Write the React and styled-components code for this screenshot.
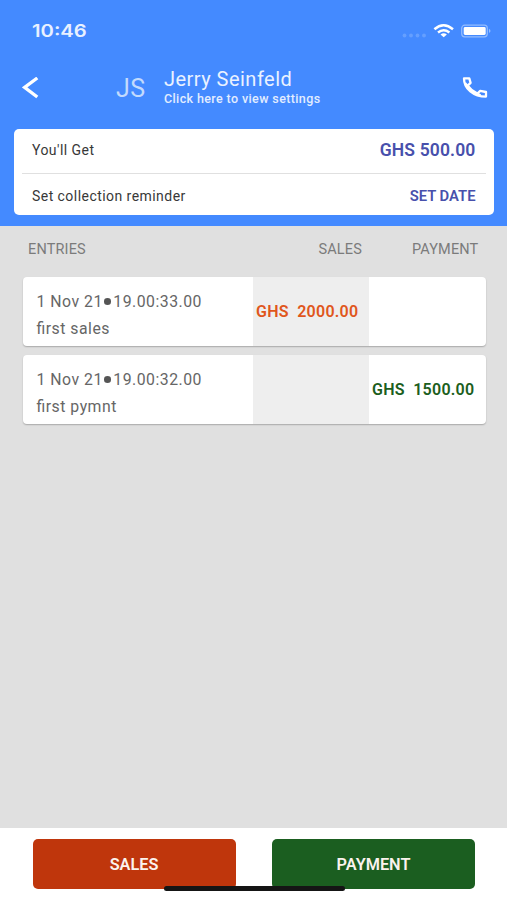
import React from "react";
import styled, { createGlobalStyle } from "styled-components";

const GlobalStyle = createGlobalStyle`
  * {
    box-sizing: border-box;
  }

  body {
    margin: 0;
    font-family: Roboto, "Liberation Sans", sans-serif;
  }
`;

const Screen = styled.div`
  width: 507px;
  height: 900px;
  display: flex;
  flex-direction: column;
  position: relative;
  background: #e0e0e0;
  overflow: hidden;
`;

const Top = styled.header`
  height: 226px;
  background: #448aff;
`;

const StatusBar = styled.div`
  height: 60px;
  padding: 2px 16px 0 32px;
  display: flex;
  align-items: center;
  justify-content: space-between;
`;

const Time = styled.span`
  font-family: Inter, sans-serif;
  font-size: 17px;
  font-weight: 600;
  color: #e9f1ff;
  transform: scaleX(1.19);
  transform-origin: left center;
`;

const StatusIcons = styled.div`
  display: flex;
  align-items: center;
`;

const NavBar = styled.div`
  height: 55px;
  display: flex;
  align-items: center;
  padding: 0 19px 0 22px;
`;

const BackIcon = styled.svg`
  width: 18px;
  height: 22px;
`;

const Initials = styled.span`
  margin-left: 76px;
  padding-top: 2px;
  width: 48px;
  font-size: 25px;
  letter-spacing: 0.5px;
  color: #c3dafd;
`;

const Person = styled.div`
  flex: 1;
  display: flex;
  flex-direction: column;
`;

const Name = styled.span`
  font-size: 20px;
  line-height: 20px;
  padding-bottom: 2px;
  letter-spacing: 0.47px;
  color: #eaf2ff;
`;

const Hint = styled.span`
  font-size: 12.5px;
  font-weight: 500;
  line-height: 16px;
  letter-spacing: 0.38px;
  color: #e2edff;
`;

const SummaryCard = styled.div`
  margin: 14px 13px 0 14px;
  height: 86px;
  padding: 0 8px;
  border-radius: 5px;
  background: #fff;
`;

const SummaryRow = styled.div`
  height: ${(p) => (p.$divider ? 45 : 41)}px;
  padding: ${(p) => (p.$divider ? "0 10.5px 3px 10px" : "3px 10.5px 0 10px")};
  display: flex;
  align-items: center;
  justify-content: space-between;
  border-bottom: ${(p) => (p.$divider ? "1.5px solid #e0e0e0" : "none")};
`;

const SummaryLabel = styled.span`
  font-size: 14px;
  letter-spacing: 0.45px;
  color: #383838;
`;

const SummaryValue = styled.span`
  font-size: ${(p) => p.$size}px;
  font-weight: 600;
  letter-spacing: ${(p) => p.$spacing}px;
  color: #4850ac;
`;

const Columns = styled.div`
  display: grid;
  grid-template-columns: 290.5px 93.5px 1fr;
  padding: 0 28px;
  height: 51px;
  align-items: center;
  padding-bottom: 5px;
  font-size: 14.5px;
  letter-spacing: 0.15px;
  color: #7b7b7b;
`;

const Entries = styled.main`
  flex: 1;
  display: flex;
  flex-direction: column;
  gap: 9px;
  padding: 0 21.5px 0 22.5px;
`;

const Entry = styled.div`
  height: 69px;
  display: grid;
  grid-template-columns: 230.5px 116px 1fr;
  border-radius: 4px;
  background: #fff;
  box-shadow: 0 1px 1.5px rgba(0, 0, 0, 0.25);
`;

const Details = styled.div`
  display: flex;
  flex-direction: column;
  padding: 11px 0 0 14px;
  font-size: 15.8px;
  line-height: 27px;
  letter-spacing: 0.5px;
  font-feature-settings: "liga" 1;
  color: #666;
`;

const When = styled.span`
  display: flex;
  align-items: center;
`;

const Dot = styled.i`
  width: 7.5px;
  height: 7px;
  margin: 0 2px 0 1px;
  border-radius: 50%;
  background: #555;
`;

const Amount = styled.div`
  display: flex;
  align-items: center;
  padding-left: 3px;
  font-size: 16px;
  font-weight: 600;
  letter-spacing: 0.25px;
  white-space: pre;
  color: ${(p) => p.$color};
  background: ${(p) => p.$bg || "transparent"};
`;

const Footer = styled.footer`
  height: 72px;
  padding: 11px 32px 0 32.5px;
  display: flex;
  justify-content: space-between;
  background: #fff;
`;

const ActionButton = styled.button`
  width: 203px;
  height: 50px;
  border: none;
  border-radius: 5px;
  font-family: inherit;
  font-size: 16.3px;
  font-weight: 600;
  color: #fbf3ee;
  background: ${(p) => p.$bg};
`;

const HomeIndicator = styled.div`
  position: absolute;
  left: 164px;
  bottom: 9px;
  width: 181px;
  height: 5px;
  border-radius: 3px;
  background: #151515;
`;

const entries = [
  { id: 1, date: "1 Nov 21", time: "19.00:33.00", note: "first sales", sales: "GHS  2000.00" },
  { id: 2, date: "1 Nov 21", time: "19.00:32.00", note: "first pymnt", payment: "GHS  1500.00" },
];

const App = () => {
  return (
    <>
      <GlobalStyle />
      <Screen>
        <Top>
          <StatusBar>
            <Time>10:46</Time>
            <StatusIcons>
              <svg width="90" height="16" viewBox="0 0 90 16">
                <g fill="#659fff">
                  <circle cx="3.5" cy="12.5" r="1.9" />
                  <circle cx="10" cy="12.5" r="1.9" />
                  <circle cx="16.5" cy="12.5" r="1.9" />
                  <circle cx="23" cy="12.5" r="1.9" />
                </g>
                <g fill="none" stroke="#fff" strokeWidth="2.5">
                  <path d="M33.4 6.2Q42.5 -1.6 52 6.2" />
                  <path d="M37 9.4Q42.6 5 48.4 9.4" />
                </g>
                <path d="M39.5 11.4Q42.7 9.2 45.9 11.4L42.7 14.2Z" fill="#fff" />
                <rect x="60.7" y="2.2" width="25.6" height="11.6" rx="3" fill="none" stroke="#94bdff" strokeWidth="1.2" />
                <rect x="62.7" y="4" width="22" height="8" rx="1.4" fill="#fff" />
                <path d="M88 5.7q3 2.2 0 4.4z" fill="#94bdff" />
              </svg>
            </StatusIcons>
          </StatusBar>
          <NavBar>
            <BackIcon viewBox="0 0 18 22" fill="none" stroke="#fff" strokeWidth="3.3">
              <path d="M15.3 1L2.6 10.4L15.3 20" />
            </BackIcon>
            <Initials>JS</Initials>
            <Person>
              <Name>Jerry Seinfeld</Name>
              <Hint>Click here to view settings</Hint>
            </Person>
            <svg width="26" height="22" viewBox="0 0.5 26 22" fill="none" stroke="#fff" strokeWidth="2.3" strokeLinejoin="round">
              <path d="M2 1.9H7.3L8.6 6.3L5.7 9.1C8.1 12.5 11.5 15.3 15.4 17L18.2 14.4L24 15.5V20.1C11.5 20.1 2 12.2 2 1.9Z" />
              <path d="M3 6.5L5.2 9M15.4 17L18.5 19" />
            </svg>
          </NavBar>
          <SummaryCard>
            <SummaryRow $divider>
              <SummaryLabel>You'll Get</SummaryLabel>
              <SummaryValue $size={17.5} $spacing={0.15}>GHS 500.00</SummaryValue>
            </SummaryRow>
            <SummaryRow>
              <SummaryLabel>Set collection reminder</SummaryLabel>
              <SummaryValue $size={14.8} $spacing={0}>SET DATE</SummaryValue>
            </SummaryRow>
          </SummaryCard>
        </Top>
        <Columns>
          <span>ENTRIES</span>
          <span>SALES</span>
          <span>PAYMENT</span>
        </Columns>
        <Entries>
          {entries.map((e) => (
            <Entry key={e.id}>
              <Details>
                <When>
                  {e.date}
                  <Dot />
                  {e.time}
                </When>
                <span>{e.note}</span>
              </Details>
              <Amount $color="#e0561c" $bg="#eeeeee">{e.sales}</Amount>
              <Amount $color="#1b5e20">{e.payment}</Amount>
            </Entry>
          ))}
        </Entries>
        <Footer>
          <ActionButton $bg="#bf360c">SALES</ActionButton>
          <ActionButton $bg="#1b5e20">PAYMENT</ActionButton>
        </Footer>
        <HomeIndicator />
      </Screen>
    </>
  );
};

export default App;
